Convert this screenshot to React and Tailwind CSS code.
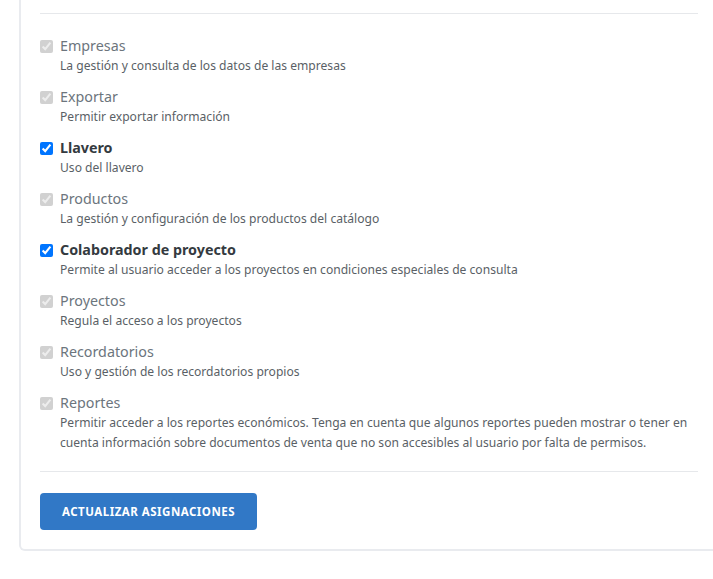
const permisos = [
  { nombre: "Empresas", desc: "La gestión y consulta de los datos de las empresas", activo: false },
  { nombre: "Exportar", desc: "Permitir exportar información", activo: false },
  { nombre: "Llavero", desc: "Uso del llavero", activo: true },
  { nombre: "Productos", desc: "La gestión y configuración de los productos del catálogo", activo: false },
  { nombre: "Colaborador de proyecto", desc: "Permite al usuario acceder a los proyectos en condiciones especiales de consulta", activo: true },
  { nombre: "Proyectos", desc: "Regula el acceso a los proyectos", activo: false },
  { nombre: "Recordatorios", desc: "Uso y gestión de los recordatorios propios", activo: false },
  {
    nombre: "Reportes",
    desc: "Permitir acceder a los reportes económicos. Tenga en cuenta que algunos reportes pueden mostrar o tener en cuenta información sobre documentos de venta que no son accesibles al usuario por falta de permisos.",
    activo: false,
  },
];

const Permiso = ({ nombre, desc, activo }) => {
  return (
    <label className="flex items-start gap-[7px]">
      <input
        type="checkbox"
        defaultChecked
        disabled={!activo}
        className="mt-[4px] w-[13px] h-[13px] shrink-0 accent-[#0075ff]"
      />
      <div className="flex flex-col">
        <span
          className={
            activo
              ? "text-[14.3px] leading-[20px] font-bold text-[#343a40]"
              : "text-[14.3px] leading-[20px] text-[#6c757d]"
          }
        >
          {nombre}
        </span>
        <span className="text-[12.1px] leading-[20px] text-[#5a5f66]">{desc}</span>
      </div>
    </label>
  );
};

export default function App() {
  return (
    <div className="w-full h-[579px] overflow-hidden bg-white pl-[19px] font-['Noto_Sans','Open_Sans',sans-serif]">
      {/* tarjeta de permisos */}
      <div className="w-[700px] bg-white border-2 border-t-0 border-[#e9ebef] rounded-b-[6px] px-[19px] pb-[19px]">
        <div className="h-[13px]" />
        <div className="border-t border-[#e6e8eb]" />

        <div className="flex flex-col gap-[11px] pt-[22px] pb-[18px]">
          {permisos.map((p) => (
            <Permiso key={p.nombre} {...p} />
          ))}
        </div>

        <div className="border-t border-[#e6e8eb]" />

        {/* acciones */}
        <div className="pt-[21px]">
          <button className="h-[37px] w-[217px] rounded-[4px] bg-[#3178c6] text-white text-[11.5px] font-bold tracking-[0.5px] uppercase">
            Actualizar asignaciones
          </button>
        </div>
      </div>
    </div>
  );
}
